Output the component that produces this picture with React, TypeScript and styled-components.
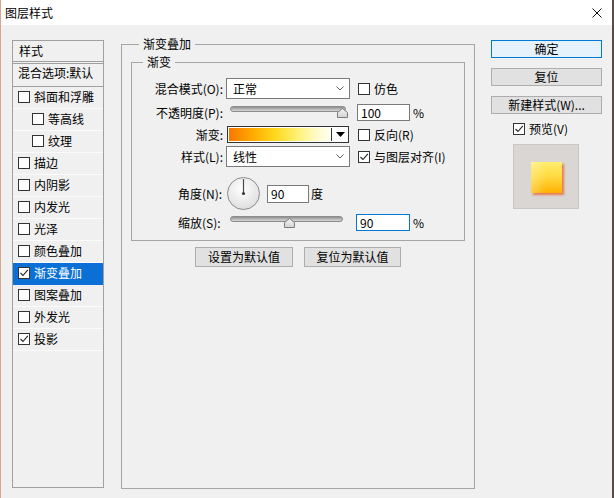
import React from 'react';
import styled, { createGlobalStyle } from 'styled-components';

const Global = createGlobalStyle`
  html, body { margin: 0; padding: 0; background: #f0f0f0; overflow: hidden; }
  body {
    font-family: "Noto Sans CJK SC", "Noto Sans", sans-serif;
    font-size: 12px;
    color: #000;
  }
  * { box-sizing: border-box; }
`;

const Window = styled.div`
  width: 614px;
  height: 498px;
  display: flex;
  flex-direction: column;
  border-left: 1px solid #dba68e;
  border-right: 2px solid #5e4a40;
  background: #f0f0f0;
  overflow: hidden;
`;

const TitleBar = styled.div`
  height: 25px;
  flex: none;
  background: #fff;
  display: flex;
  align-items: center;
  justify-content: space-between;
  padding: 0 10px 0 4px;
`;

const Title = styled.span`
  line-height: 16px;
`;

const Body = styled.div`
  flex: 1;
  display: flex;
  align-items: flex-start;
  padding: 15px 0 0 11px;
`;

/* ---------- left style list ---------- */
const StyleList = styled.div`
  width: 92px;
  height: 448px;
  flex: none;
  border: 1px solid #a0a0a0;
  display: flex;
  flex-direction: column;
  overflow: hidden;
`;

const ListHeader = styled.div`
  height: 23px;
  line-height: 20px;
  padding-left: 6px;
  border-bottom: 3px double #a0a0a0;
`;

const BlendRow = styled.div`
  height: 23px;
  line-height: 18px;
  padding-left: 5px;
  white-space: nowrap;
  border-bottom: 1px solid #a0a0a0;
`;

const ListItem = styled.div<{ $indent?: boolean; $selected?: boolean }>`
  height: 22px;
  flex: none;
  display: flex;
  align-items: center;
  gap: 4px;
  padding-left: ${p => (p.$indent ? 19 : 5)}px;
  padding-bottom: 1px;
  border-bottom: 1px solid ${p => (p.$selected ? '#0a70d6' : '#fbfbfb')};
  background: ${p => (p.$selected ? '#0a70d6' : 'transparent')};
  color: ${p => (p.$selected ? '#fff' : '#000')};
  white-space: nowrap;
  line-height: 16px;
`;

const Box = styled.span`
  width: 12px;
  height: 12px;
  flex: none;
  border: 1px solid #333;
  background: #fff;
  display: inline-flex;
  align-items: center;
  justify-content: center;
`;

const Checkbox: React.FC<{ checked?: boolean }> = ({ checked }) => (
  <Box>
    {checked && (
      <svg width="10" height="10" viewBox="0 0 10 10">
        <polyline points="1.5,5 4,7.5 8.8,1.8" fill="none" stroke="#222" strokeWidth="1.1" />
      </svg>
    )}
  </Box>
);

/* ---------- middle groups ---------- */
const OuterGroup = styled.div`
  position: relative;
  flex: none;
  margin: 4px 0 0 17px;
  width: 354px;
  height: 445px;
  padding: 17px 9px 0;
  border: 1px solid #a5a5a5;
  display: flex;
  flex-direction: column;
`;

const InnerGroup = styled.div`
  position: relative;
  width: 334px;
  height: 179px;
  flex: none;
  padding-top: 15px;
  border: 1px solid #a5a5a5;
  display: flex;
  flex-direction: column;
`;

const Legend = styled.span<{ $left: number }>`
  position: absolute;
  top: -9px;
  left: ${p => p.$left}px;
  padding: 0 4px;
  line-height: 16px;
  background: #f0f0f0;
`;

const Row = styled.div<{ $h: number; $mt: number }>`
  display: flex;
  align-items: center;
  flex: none;
  height: ${p => p.$h}px;
  margin-top: ${p => p.$mt}px;
`;

const Label = styled.span<{ $left?: boolean }>`
  width: 91px;
  flex: none;
  white-space: nowrap;
  line-height: 16px;
  text-align: ${p => (p.$left ? 'left' : 'right')};
  padding-left: ${p => (p.$left ? 46 : 0)}px;
`;

const Select = styled.div`
  margin-left: 3px;
  width: 124px;
  height: 21px;
  flex: none;
  border: 1px solid #7a7a7a;
  background: #fff;
  display: flex;
  align-items: center;
  justify-content: space-between;
  padding: 0 5px 0 6px;
  line-height: 16px;
`;

const Chevron = () => (
  <svg width="8" height="5" viewBox="0 0 8 5">
    <polyline points="0.5,0.5 4,4 7.5,0.5" fill="none" stroke="#606060" strokeWidth="1" />
  </svg>
);

const CheckLabel = styled.span<{ $ml: number }>`
  display: flex;
  align-items: center;
  gap: 4px;
  margin-left: ${p => p.$ml}px;
  line-height: 16px;
  white-space: nowrap;
`;

const Slider = styled.div<{ $w: number }>`
  position: relative;
  width: ${p => p.$w}px;
  height: 17px;
  flex: none;
  margin-left: 7px;
`;

const Track = styled.div`
  position: absolute;
  left: 0;
  right: 0;
  top: 2px;
  height: 6px;
  border-radius: 3px;
  border: 1px solid #8c8c8c;
  background: linear-gradient(#8e8e8e, #bdbdbd 60%, #d6d6d6);
`;

const ThumbWrap = styled.div<{ $left: number }>`
  position: absolute;
  top: 4px;
  left: ${p => p.$left}px;
  width: 11px;
  height: 10px;
  display: flex;
`;

const Thumb = () => (
  <svg width="11" height="10" viewBox="0 0 11 10">
    <defs>
      <linearGradient id="thumbg" x1="0" y1="0" x2="0" y2="1">
        <stop offset="0" stopColor="#f6f6f6" />
        <stop offset="1" stopColor="#d2d2d2" />
      </linearGradient>
    </defs>
    <path d="M0.5,9.5 L0.5,4.5 L5.5,0.5 L10.5,4.5 L10.5,9.5 Z" fill="url(#thumbg)" stroke="#7c7c7c" strokeWidth="1" />
  </svg>
);

const Field = styled.input<{ $w: number; $h: number; $ml: number; $focus?: boolean }>`
  width: ${p => p.$w}px;
  height: ${p => p.$h}px;
  margin: 0 0 0 ${p => p.$ml}px;
  flex: none;
  border: 1px solid ${p => (p.$focus ? '#0078d7' : '#7a7a7a')};
  background: #fff;
  padding: 0 0 0 3px;
  font: inherit;
  font-size: 12px;
  color: #000;
  outline: none;
`;

const Unit = styled.span<{ $ml: number }>`
  margin-left: ${p => p.$ml}px;
  line-height: 16px;
`;

const GradientPicker = styled.div`
  margin-left: 4px;
  width: 122px;
  height: 17px;
  flex: none;
  border: 1px solid #333;
  background: #fff;
  display: flex;
`;

const GradientFill = styled.div`
  flex: 1;
  margin: 1px 0 1px 1px;
  border-right: 1px solid #333;
  background: linear-gradient(to right, #f77600 0%, #ffa800 22%, #ffd81c 45%, #fff27a 68%, #fffbd2 88%, #fffff4 100%);
`;

const DropBtn = styled.div`
  width: 16px;
  flex: none;
  display: flex;
  align-items: center;
  justify-content: center;
`;

const Dial = styled.svg`
  margin-left: 4px;
  flex: none;
`;

const DefaultBar = styled.div`
  display: flex;
  justify-content: center;
  gap: 11px;
  margin-top: 6px;
`;

const GrayButton = styled.button<{ $w: number }>`
  width: ${p => p.$w}px;
  height: 20px;
  padding: 0;
  border: 1px solid #adadad;
  background: #e1e1e1;
  font: inherit;
  font-size: 12px;
  color: #000;
  line-height: 16px;
`;

/* ---------- right column ---------- */
const RightCol = styled.div`
  margin-left: 16px;
  width: 111px;
  flex: none;
  display: flex;
  flex-direction: column;
`;

const DialogButton = styled.button<{ $primary?: boolean; $mt: number }>`
  height: 18px;
  width: 111px;
  margin-top: ${p => p.$mt}px;
  padding: 0;
  border: 1px solid ${p => (p.$primary ? '#0078d7' : '#adadad')};
  background: ${p => (p.$primary ? '#e5f1fb' : '#e1e1e1')};
  font: inherit;
  font-size: 12px;
  color: #000;
  line-height: 14px;
`;

const PreviewToggle = styled.div`
  display: flex;
  align-items: center;
  gap: 4px;
  height: 12px;
  margin: 9px 0 0 22px;
  line-height: 14px;
`;

const PreviewBox = styled.div`
  width: 66px;
  height: 65px;
  margin: 9px 0 0 22px;
  border: 1px solid #c9c6c3;
  background: #d9d6d3;
  display: flex;
  align-items: center;
  justify-content: center;
`;

const PreviewSwatch = styled.div`
  width: 31px;
  height: 31px;
  margin: 2px 0 0 1px;
  background:
    linear-gradient(to right, rgba(255, 250, 200, 0.35), rgba(255, 255, 255, 0) 50%),
    linear-gradient(to bottom, #ffee70 0%, #ffd73c 50%, #ffb000 100%);
  box-shadow: 2px 2px 2px rgba(238, 92, 44, 0.75);
`;

const styleItems: { name: string; indent?: boolean; checked?: boolean; selected?: boolean }[] = [
  { name: '斜面和浮雕' },
  { name: '等高线', indent: true },
  { name: '纹理', indent: true },
  { name: '描边' },
  { name: '内阴影' },
  { name: '内发光' },
  { name: '光泽' },
  { name: '颜色叠加' },
  { name: '渐变叠加', checked: true, selected: true },
  { name: '图案叠加' },
  { name: '外发光' },
  { name: '投影', checked: true },
];

export default function App() {
  return (
    <>
      <Global />
      <Window>
        <TitleBar>
          <Title>图层样式</Title>
          <svg width="10" height="10" viewBox="0 0 10 10">
            <path d="M0.5,0.5 L9.5,9.5 M9.5,0.5 L0.5,9.5" stroke="#111" strokeWidth="1" />
          </svg>
        </TitleBar>
        <Body>
          <StyleList>
            <ListHeader>样式</ListHeader>
            <BlendRow>混合选项:默认</BlendRow>
            {styleItems.map(it => (
              <ListItem key={it.name} $indent={it.indent} $selected={it.selected}>
                <Checkbox checked={it.checked} />
                <span>{it.name}</span>
              </ListItem>
            ))}
          </StyleList>

          <OuterGroup>
            <Legend $left={17}>渐变叠加</Legend>
            <InnerGroup>
              <Legend $left={11}>渐变</Legend>

              <Row $h={21} $mt={0}>
                <Label>混合模式(O):</Label>
                <Select>
                  <span>正常</span>
                  <Chevron />
                </Select>
                <CheckLabel $ml={8}>
                  <Checkbox />
                  仿色
                </CheckLabel>
              </Row>

              <Row $h={17} $mt={5}>
                <Label>不透明度(P):</Label>
                <Slider $w={116}>
                  <Track />
                  <ThumbWrap $left={107}>
                    <Thumb />
                  </ThumbWrap>
                </Slider>
                <Field $w={53} $h={17} $ml={11} readOnly value="100" />
                <Unit $ml={3}>%</Unit>
              </Row>

              <Row $h={17} $mt={5}>
                <Label>渐变:</Label>
                <GradientPicker>
                  <GradientFill />
                  <DropBtn>
                    <svg width="9" height="5" viewBox="0 0 9 5">
                      <path d="M0,0 L9,0 L4.5,5 Z" fill="#000" />
                    </svg>
                  </DropBtn>
                </GradientPicker>
                <CheckLabel $ml={9}>
                  <Checkbox />
                  反向(R)
                </CheckLabel>
              </Row>

              <Row $h={21} $mt={3}>
                <Label>样式(L):</Label>
                <Select>
                  <span>线性</span>
                  <Chevron />
                </Select>
                <CheckLabel $ml={8}>
                  <Checkbox checked />
                  与图层对齐(I)
                </CheckLabel>
              </Row>

              <Row $h={33} $mt={10}>
                <Label $left>角度(N):</Label>
                <Dial width="33" height="33" viewBox="0 0 33 33">
                  <defs>
                    <radialGradient id="dialg" cx="0.45" cy="0.35" r="0.7">
                      <stop offset="0" stopColor="#ffffff" />
                      <stop offset="1" stopColor="#dcdcdc" />
                    </radialGradient>
                  </defs>
                  <circle cx="16.5" cy="16.5" r="16" fill="url(#dialg)" stroke="#8a8a8a" strokeWidth="1" />
                  <line x1="16.5" y1="16.5" x2="16.5" y2="2" stroke="#4a4a4a" strokeWidth="1.2" />
                  <circle cx="16.5" cy="16.5" r="1.6" fill="#3a3a3a" />
                </Dial>
                <Field $w={42} $h={18} $ml={7} readOnly value="90" />
                <Unit $ml={2}>度</Unit>
              </Row>

              <Row $h={17} $mt={4}>
                <Label $left>缩放(S):</Label>
                <Slider $w={113}>
                  <Track />
                  <ThumbWrap $left={54}>
                    <Thumb />
                  </ThumbWrap>
                </Slider>
                <Field $w={54} $h={17} $ml={13} $focus readOnly value="90" />
                <Unit $ml={3}>%</Unit>
              </Row>
            </InnerGroup>

            <DefaultBar>
              <GrayButton $w={98}>设置为默认值</GrayButton>
              <GrayButton $w={97}>复位为默认值</GrayButton>
            </DefaultBar>
          </OuterGroup>

          <RightCol>
            <DialogButton $primary $mt={0}>确定</DialogButton>
            <DialogButton $mt={10}>复位</DialogButton>
            <DialogButton $mt={10}>新建样式(W)...</DialogButton>
            <PreviewToggle>
              <Checkbox checked />
              <span>预览(V)</span>
            </PreviewToggle>
            <PreviewBox>
              <PreviewSwatch />
            </PreviewBox>
          </RightCol>
        </Body>
      </Window>
    </>
  );
}
